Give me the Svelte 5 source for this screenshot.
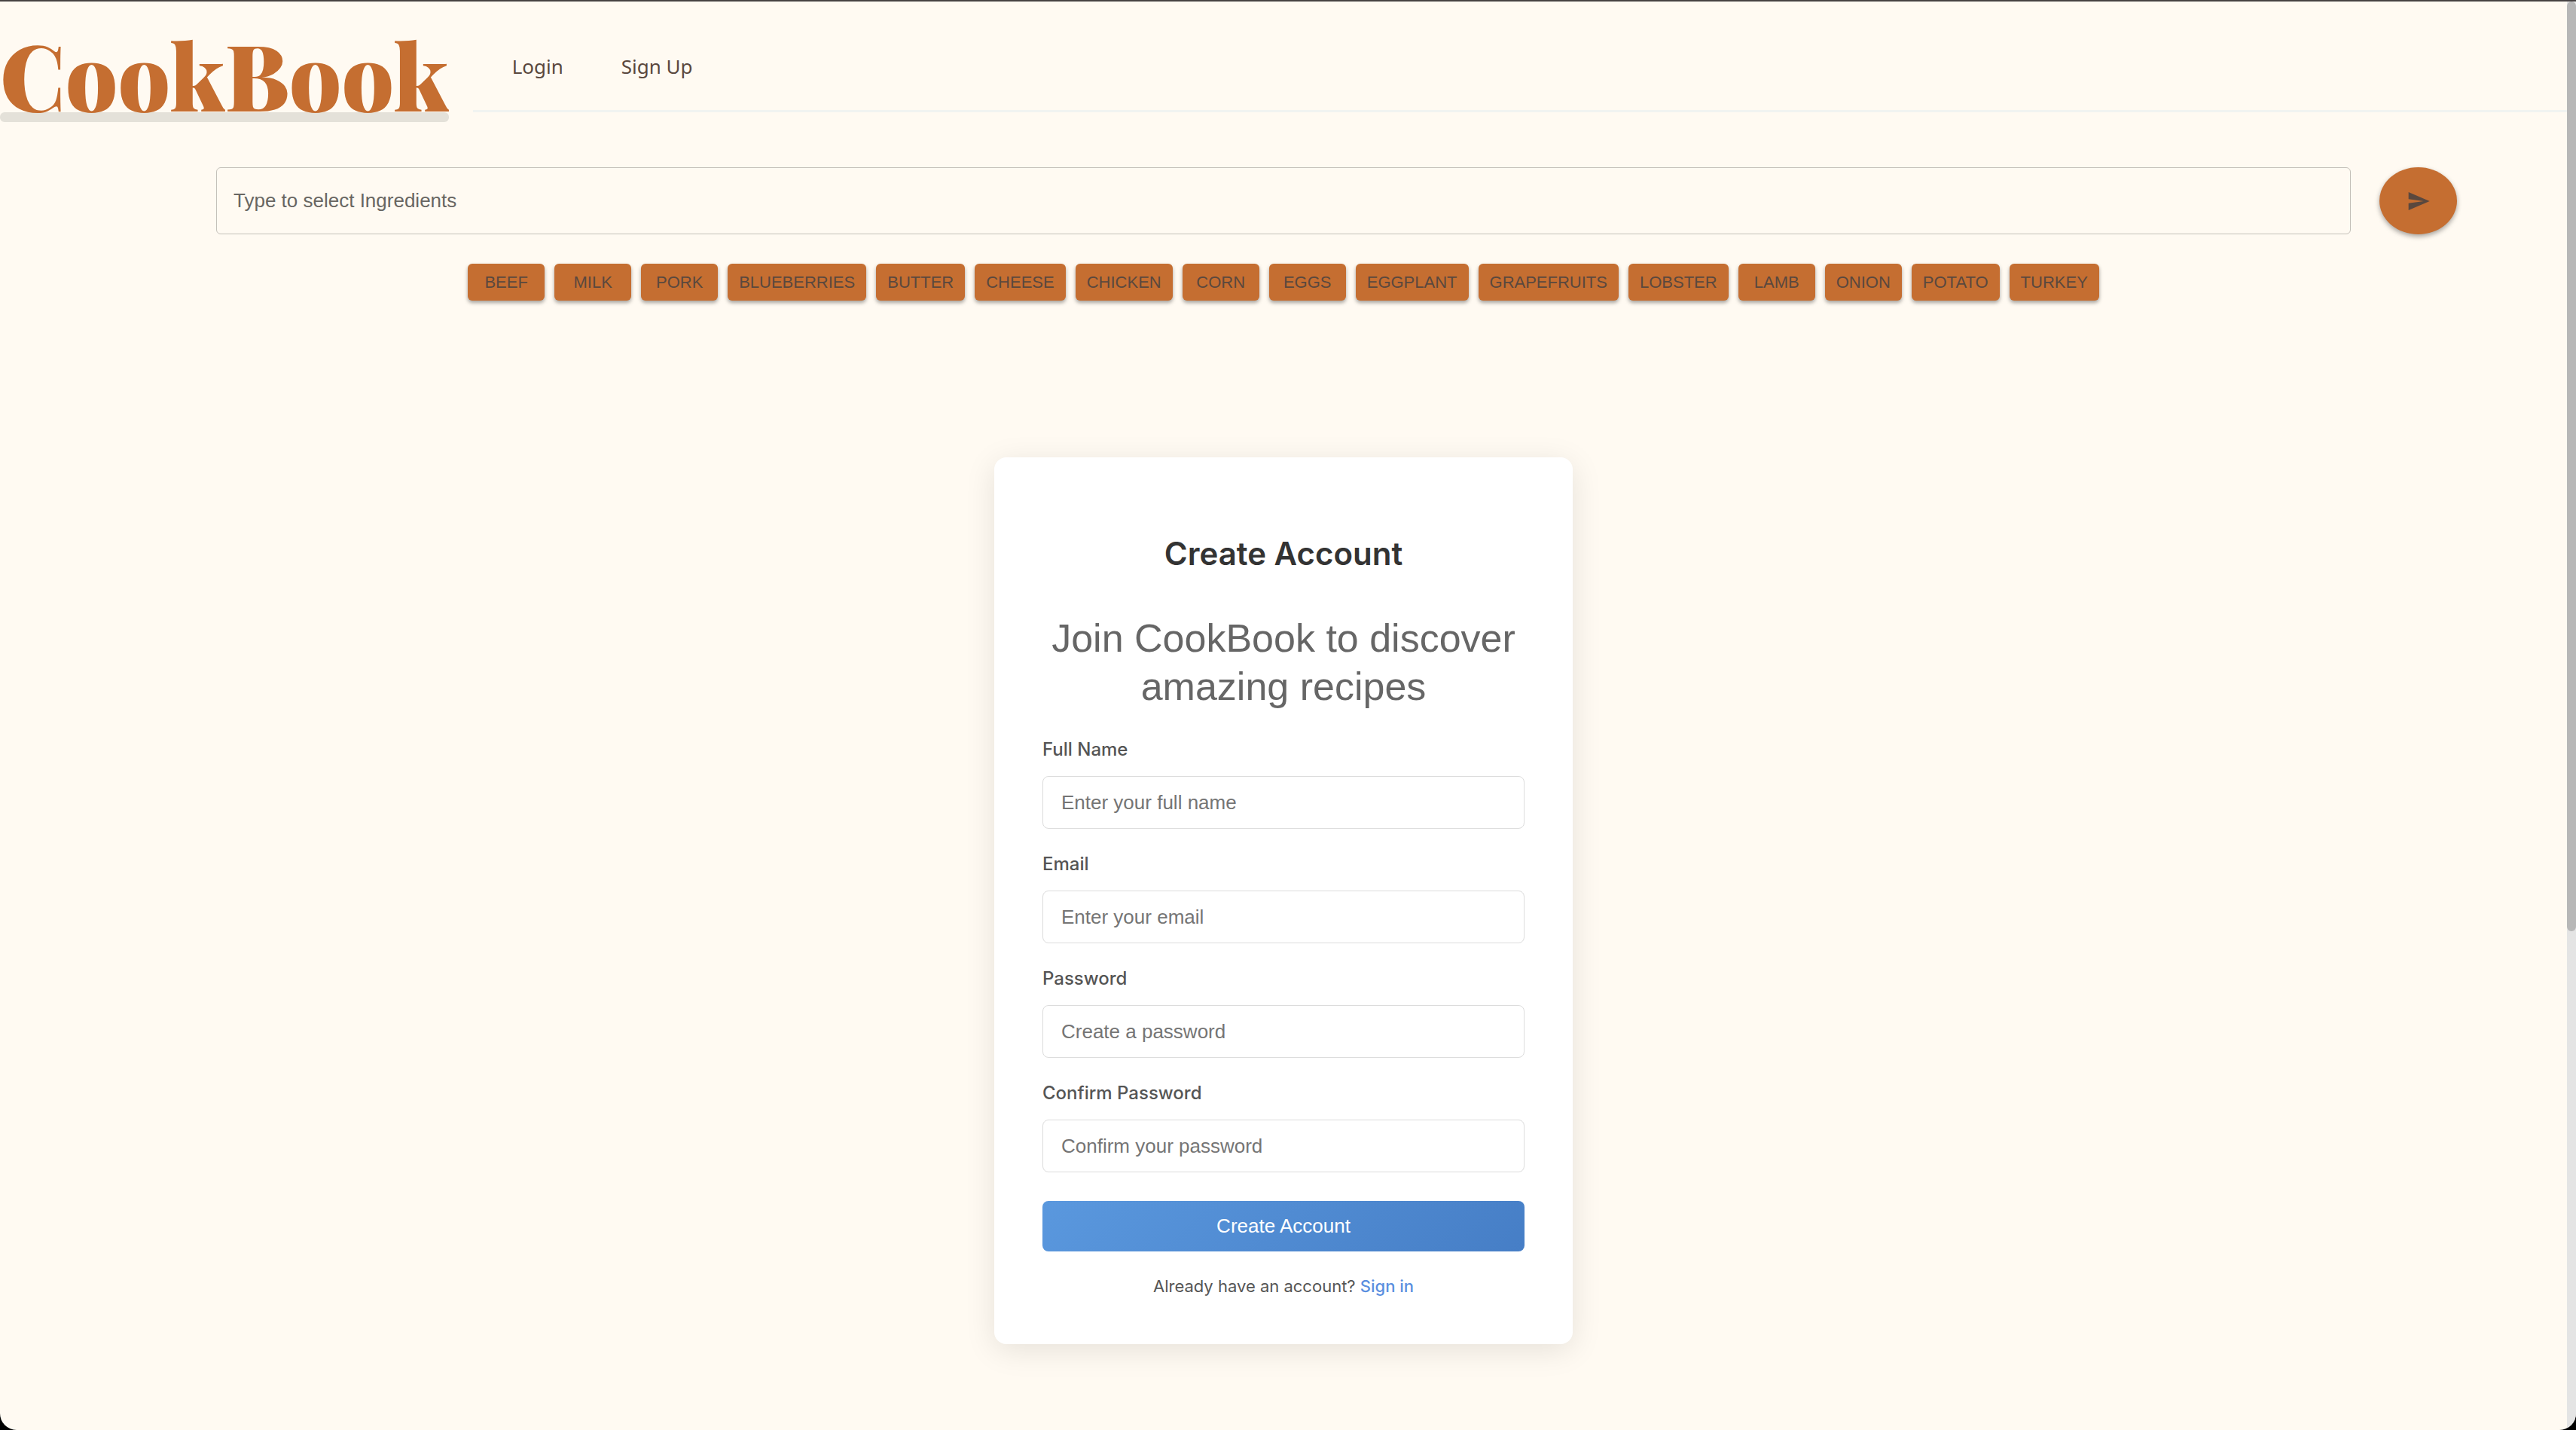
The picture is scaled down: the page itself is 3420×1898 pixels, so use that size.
<script>
  const ingredients = [
    'Beef', 'Milk', 'Pork', 'Blueberries', 'Butter', 'Cheese', 'Chicken', 'Corn',
    'Eggs', 'Eggplant', 'Grapefruits', 'Lobster', 'Lamb', 'Onion', 'Potato', 'Turkey'
  ];

  const fields = [
    { id: 'name', label: 'Full Name', type: 'text', placeholder: 'Enter your full name' },
    { id: 'email', label: 'Email', type: 'email', placeholder: 'Enter your email' },
    { id: 'password', label: 'Password', type: 'password', placeholder: 'Create a password' },
    { id: 'confirm', label: 'Confirm Password', type: 'password', placeholder: 'Confirm your password' }
  ];
</script>

<div class="window">
  <div class="page">
    <header>
      <a class="logo" href="#home">CookBook</a>
      <nav>
        <a href="#login">Login</a>
        <a href="#signup">Sign Up</a>
      </nav>
    </header>

    <main>
      <form class="search">
        <input type="text" aria-label="Ingredients" placeholder="Type to select Ingredients" />
        <button type="button" aria-label="Search recipes">
          <svg viewBox="0 0 24 24" aria-hidden="true">
            <path d="M2.01 21 23 12 2.01 3 2 10l15 2-15 2z" />
          </svg>
        </button>
      </form>

      <div class="chips">
        {#each ingredients as item}
          <button type="button">{item}</button>
        {/each}
      </div>

      <form class="card">
        <h1>Create Account</h1>
        <p class="intro">Join CookBook to discover amazing recipes</p>
        {#each fields as field}
          <div class="field">
            <label for={field.id}>{field.label}</label>
            <input id={field.id} type={field.type} placeholder={field.placeholder} />
          </div>
        {/each}
        <button class="submit" type="button">Create Account</button>
        <p class="signin">Already have an account? <a href="#login">Sign in</a></p>
      </form>
    </main>
  </div>
  <div class="track"><div class="thumb"></div></div>
</div>

<style>
  :global(body) {
    background: #000;
  }

  .window {
    display: flex;
    box-sizing: border-box;
    min-height: 100vh;
    border-top: 2px solid #464242;
    border-radius: 0 0 22px 22px;
    background: #fffaf2;
    overflow: hidden;
    font-family: Inter, "Liberation Sans", sans-serif;
  }

  .page {
    flex: 1;
    min-width: 0;
  }

  .track {
    width: 12px;
    background: #e4e4e4;
  }

  .thumb {
    height: 65vh;
    border-radius: 6px;
    background: #b7b7b7;
  }

  a {
    text-decoration: none;
  }

  button,
  input {
    box-sizing: border-box;
    font-family: "Liberation Sans", Arial, sans-serif;
  }

  button {
    border: 0;
    cursor: pointer;
  }

  header {
    display: flex;
    align-items: flex-start;
    gap: 32px;
  }

  .logo {
    position: relative;
    z-index: 0;
    margin-top: 44px;
    color: #c56e31;
    font: 900 121px/104px "Playfair Display", "Liberation Serif", serif;
  }

  .logo::after {
    content: "";
    position: absolute;
    inset: auto 0 -12px;
    z-index: -1;
    height: 13px;
    border-radius: 6px;
    background: #e4e1d9;
  }

  nav {
    flex: 1;
    display: flex;
    gap: 77px;
    padding: 66px 52px 38px;
    border-bottom: 3px solid #f1f3f1;
  }

  nav a {
    color: #5a483e;
    font: 26px/40px "Noto Sans", "Open Sans", sans-serif;
  }

  .search {
    display: flex;
    gap: 38px;
    margin-top: 72px;
    padding: 0 146px 0 287px;
  }

  .search input {
    flex: 1;
    min-width: 0;
    height: 89px;
    padding: 0 22px;
    border: 1px solid #c4c0b9;
    border-radius: 6px;
    background: transparent;
    font-size: 26px;
  }

  .search input::placeholder {
    color: #686662;
    opacity: 1;
  }

  .search button {
    display: grid;
    place-items: center;
    width: 103px;
    border-radius: 50%;
    background: #c56e31;
    box-shadow: 0 3px 6px rgb(0 0 0 / 35%);
  }

  .search svg {
    width: 32px;
    height: 32px;
    fill: #5a483e;
  }

  .chips {
    display: flex;
    flex-wrap: wrap;
    justify-content: center;
    gap: 13px;
    margin-top: 39px;
  }

  .chips button {
    min-width: 102px;
    height: 49px;
    padding: 0 15px;
    border-radius: 6px;
    background: #c56e31;
    box-shadow: 0 3px 5px rgb(0 0 0 / 35%);
    color: #5a483e;
    font-size: 22px;
    text-transform: uppercase;
  }

  .card {
    box-sizing: border-box;
    width: 768px;
    margin: 208px auto 0;
    padding: 96px 64px 61px;
    border-radius: 16px;
    background: #fff;
    box-shadow: 0 8px 40px rgb(0 0 0 / 10%);
  }

  h1 {
    margin: 0;
    color: #333;
    font-size: 42px;
    font-weight: 600;
    line-height: 64px;
    text-align: center;
  }

  .intro {
    margin: 48px 0 40px;
    color: #666;
    font-family: "Liberation Sans", Arial, sans-serif;
    font-size: 52px;
    line-height: 64px;
    text-align: center;
  }

  .field {
    display: grid;
    gap: 23px;
    margin-bottom: 35px;
  }

  label {
    color: #555;
    font-size: 24px;
    font-weight: 500;
    line-height: 24px;
  }

  .field input {
    width: 100%;
    height: 70px;
    padding: 0 24px;
    border: 1px solid #dcdcdc;
    border-radius: 8px;
    background: #fff;
    font-size: 26px;
  }

  .field input::placeholder {
    color: #757575;
    opacity: 1;
  }

  .submit {
    width: 100%;
    height: 67px;
    margin-top: 3px;
    border-radius: 8px;
    background: linear-gradient(135deg, #5a98de, #467ec6);
    color: #fff;
    font-size: 26px;
  }

  .signin {
    margin: 30px 0 0;
    color: #555;
    font-size: 22px;
    line-height: 32px;
    text-align: center;
  }

  .signin a {
    color: #5a8fe0;
    font-weight: 500;
  }
</style>
